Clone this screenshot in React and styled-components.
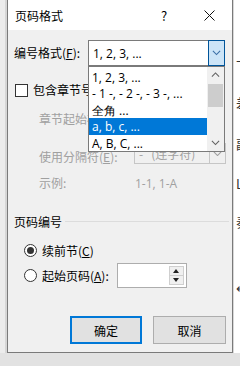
import styled, { createGlobalStyle } from 'styled-components'

const GlobalStyle = createGlobalStyle`
  html, body {
    margin: 0;
    padding: 0;
    background: #e2e2e2;
    font-family: "Noto Sans CJK SC", "Noto Sans", sans-serif;
    font-size: 12px;
    color: #000;
  }
`

const Page = styled.div`
  display: flex;
  width: 240px;
  height: 366px;
  overflow: hidden;
`

const LeftStrip = styled.div`
  width: 7px;
  height: 353px;
  background: linear-gradient(to right, #ececec 0 5px, #d6d6d6 5px);
`

const RightStrip = styled.div`
  width: 7px;
  height: 353px;
  background: #fff;
  border-left: 1px solid #d8d8d8;
  overflow: hidden;
  display: flex;
  flex-direction: column;
  font-size: 13px;
  color: #333;
  padding-left: 2px;
  box-sizing: border-box;
`

const Frag = styled.span`
  margin-top: ${({ $mt }) => $mt}px;
  line-height: 14px;
  white-space: nowrap;
`

const Dialog = styled.div`
  width: 226px;
  height: 353px;
  box-sizing: border-box;
  border: 1px solid #7a7a7a;
  border-top: none;
  background: #f0f0f0;
  display: flex;
  flex-direction: column;
`

const TitleBar = styled.div`
  height: 30px;
  background: #fff;
  display: flex;
  align-items: center;
  padding-left: 7px;
  padding-right: 15px;
  font-size: 12px;
`

const Title = styled.span`
  flex: 1;
`

const TitleBtn = styled.span`
  width: ${({ $w }) => $w}px;
  margin-right: ${({ $mr }) => $mr || 0}px;
  display: flex;
  justify-content: center;
  align-items: center;
  font-size: 13px;
`

const Body = styled.div`
  padding: 0 6px;
  display: flex;
  flex-direction: column;
  position: relative;
`

const Row = styled.div`
  display: flex;
  align-items: ${({ $end }) => ($end ? 'flex-end' : 'center')};
  height: ${({ $h }) => $h}px;
  margin-top: ${({ $mt }) => $mt}px;
  padding-left: ${({ $pl }) => $pl || 0}px;
  color: ${({ $disabled }) => ($disabled ? '#a0a0a0' : '#000')};
`

const Label = styled.span`
  width: ${({ $w }) => $w}px;
  flex-shrink: 0;
  white-space: nowrap;
  line-height: 14px;
`

const U = styled.span`
  text-decoration: underline;
`

const Latin = styled.span`
  font-family: "Open Sans", "Noto Sans", sans-serif;
  font-size: 12px;
`

const ComboWrap = styled.div`
  position: relative;
  width: ${({ $w }) => $w}px;
  height: ${({ $h }) => $h}px;
`

const Combo = styled.div`
  box-sizing: border-box;
  width: 100%;
  height: 100%;
  display: flex;
  align-items: center;
  background: ${({ $disabled }) => ($disabled ? '#f0f0f0' : '#fff')};
  border: 1px solid ${({ $disabled }) => ($disabled ? '#c6c6c6' : '#7a7a7a')};
  padding-left: 4px;
  color: ${({ $disabled }) => ($disabled ? '#a0a0a0' : '#000')};
`

const ComboText = styled.span`
  flex: 1;
  white-space: nowrap;
`

const ComboArrow = styled.div`
  width: 17px;
  align-self: stretch;
  margin: -1px -1px -1px 0;
  box-sizing: border-box;
  display: flex;
  align-items: center;
  justify-content: center;
  background: ${({ $active }) => ($active ? '#cce4f7' : '#f0f0f0')};
  border: 1px solid ${({ $active }) => ($active ? '#005499' : '#c6c6c6')};
  color: ${({ $active }) => ($active ? '#333' : '#a0a0a0')};
`

const List = styled.div`
  position: absolute;
  top: 26px;
  left: 0;
  width: 137px;
  height: 86px;
  box-sizing: border-box;
  background: #fff;
  border: 1px solid #7a7a7a;
  display: flex;
  z-index: 5;
`

const Items = styled.div`
  flex: 1;
  padding-top: 2px;
  display: flex;
  flex-direction: column;
`

const Item = styled.div`
  height: 16.4px;
  line-height: 16.4px;
  padding-left: 3px;
  white-space: nowrap;
  overflow: hidden;
  background: ${({ $sel }) => ($sel ? '#0078d7' : 'transparent')};
  color: ${({ $sel }) => ($sel ? '#fff' : '#000')};
`

const ScrollBar = styled.div`
  width: 17px;
  background: #f0f0f0;
  display: flex;
  flex-direction: column;
  align-items: center;
`

const ScrollArrow = styled.div`
  height: 16px;
  display: flex;
  align-items: center;
  justify-content: center;
  color: #606060;
`

const Thumb = styled.div`
  width: 15px;
  height: 23px;
  margin-top: 1px;
  background: #cdcdcd;
`

const Spacer = styled.div`
  flex: 1;
`

const CheckBox = styled.span`
  width: 13px;
  height: 13px;
  box-sizing: border-box;
  border: 1px solid #333;
  background: #fff;
  margin: 0 5px 0 1px;
  flex-shrink: 0;
`

const GroupHead = styled.div`
  display: flex;
  align-items: center;
  height: 16px;
  margin-top: 22px;
`

const GroupLine = styled.div`
  flex: 1;
  height: 1px;
  background: #dcdcdc;
  margin-left: 3px;
  margin-right: -3px;
`

const Radio = styled.span`
  width: 13px;
  height: 13px;
  box-sizing: border-box;
  border-radius: 50%;
  border: 1px solid #333;
  background: #fff;
  margin: 0 5px 0 10px;
  display: flex;
  align-items: center;
  justify-content: center;
  flex-shrink: 0;
  &::after {
    content: '';
    width: 7px;
    height: 7px;
    border-radius: 50%;
    background: ${({ $on }) => ($on ? '#333' : 'transparent')};
  }
`

const Spin = styled.div`
  margin-left: 8px;
  width: 70px;
  height: 25px;
  box-sizing: border-box;
  border: 1px solid #adadad;
  background: #fff;
  display: flex;
  justify-content: flex-end;
  padding: 2px;
`

const SpinBtns = styled.div`
  width: 15px;
  display: flex;
  flex-direction: column;
  border: 1px solid #cfcfcf;
  box-sizing: border-box;
`

const SpinBtn = styled.div`
  flex: 1;
  background: #f0f0f0;
  display: flex;
  align-items: center;
  justify-content: center;
  & + & {
    border-top: 1px solid #cfcfcf;
  }
`

const Buttons = styled.div`
  display: flex;
  justify-content: flex-end;
  gap: 11px;
  margin-top: 28px;
`

const Button = styled.div`
  width: ${({ $w }) => $w}px;
  height: 28px;
  box-sizing: border-box;
  background: #e1e1e1;
  border: ${({ $def }) => ($def ? '2px solid #0078d7' : '1px solid #adadad')};
  display: flex;
  align-items: center;
  justify-content: center;
`

const Chevron = ({ up, size = 9, color = 'currentColor' }) => (
  <svg width={size} height={size / 2 + 1} viewBox="0 0 10 6">
    <polyline
      points={up ? '1,5 5,1 9,5' : '1,1 5,5 9,1'}
      fill="none"
      stroke={color}
      strokeWidth="1.2"
    />
  </svg>
)

const Tri = ({ up }) => (
  <svg width="6" height="4" viewBox="0 0 6 4">
    <polygon points={up ? '0,4 3,0 6,4' : '0,0 6,0 3,4'} fill="#222" />
  </svg>
)

const items = ['1, 2, 3, ...', '- 1 -, - 2 -, - 3 -, ...', '全角 ...', 'a, b, c, ...', 'A, B, C, ...']

const App = () => (
  <Page>
    <GlobalStyle />
    <LeftStrip />
    <Dialog>
      <TitleBar>
        <Title>页码格式</Title>
        <TitleBtn $w={30} $mr={22}>?</TitleBtn>
        <TitleBtn $w={16}>
          <svg width="11" height="11" viewBox="0 0 11 11">
            <path d="M0.5 0.5 L10.5 10.5 M10.5 0.5 L0.5 10.5" stroke="#111" strokeWidth="1" />
          </svg>
        </TitleBtn>
      </TitleBar>
      <Body>
        <Row $h={26} $mt={10}>
          <Label $w={74}>编号格式(<U>F</U>):</Label>
          <ComboWrap $w={137} $h={26}>
            <Combo>
              <ComboText><Latin>1, 2, 3, ...</Latin></ComboText>
              <ComboArrow $active>
                <Chevron color="#3a6ea5" />
              </ComboArrow>
            </Combo>
            <List>
              <Items>
                {items.map((t, i) => (
                  <Item key={t} $sel={i === 3}>
                    <Latin>{t}</Latin>
                  </Item>
                ))}
              </Items>
              <ScrollBar>
                <ScrollArrow><Chevron up size={9} /></ScrollArrow>
                <Thumb />
                <Spacer />
                <ScrollArrow><Chevron size={9} /></ScrollArrow>
              </ScrollBar>
            </List>
          </ComboWrap>
        </Row>
        <Row $h={16} $mt={16}>
          <CheckBox />
          <Label>包含章节号(<U>N</U>)</Label>
        </Row>
        <Row $h={22} $mt={10} $pl={25} $disabled>
          <Label>章节起始样式(<U>P</U>):</Label>
        </Row>
        <Row $h={21} $mt={13} $pl={25} $end $disabled>
          <Label $w={95}>使用分隔符(<U>E</U>):</Label>
          <ComboWrap $w={97} $h={21}>
            <Combo $disabled>
              <ComboText>-&nbsp;&nbsp;&nbsp;(连字符)</ComboText>
              <ComboArrow>
                <Chevron />
              </ComboArrow>
            </Combo>
          </ComboWrap>
        </Row>
        <Row $h={16} $mt={11} $pl={25} $disabled>
          <Label $w={96}>示例:</Label>
          <Latin>1-1, 1-A</Latin>
        </Row>
        <GroupHead>
          <span>页码编号</span>
          <GroupLine />
        </GroupHead>
        <Row $h={16} $mt={13}>
          <Radio $on />
          <span>续前节(<U>C</U>)</span>
        </Row>
        <Row $h={25} $mt={5}>
          <Radio />
          <span>起始页码(<U>A</U>):</span>
          <Spin>
            <SpinBtns>
              <SpinBtn><Tri up /></SpinBtn>
              <SpinBtn><Tri /></SpinBtn>
            </SpinBtns>
          </Spin>
        </Row>
        <Buttons>
          <Button $w={72} $def>确定</Button>
          <Button $w={73}>取消</Button>
        </Buttons>
      </Body>
    </Dialog>
    <RightStrip>
      <Frag $mt={55}>十</Frag>
      <Frag $mt={27}>差</Frag>
      <Frag $mt={27}>副</Frag>
      <Frag $mt={26}>L</Frag>
      <Frag $mt={24}>奏</Frag>
      <Frag $mt={52}>↵</Frag>
    </RightStrip>
  </Page>
)

export default App
